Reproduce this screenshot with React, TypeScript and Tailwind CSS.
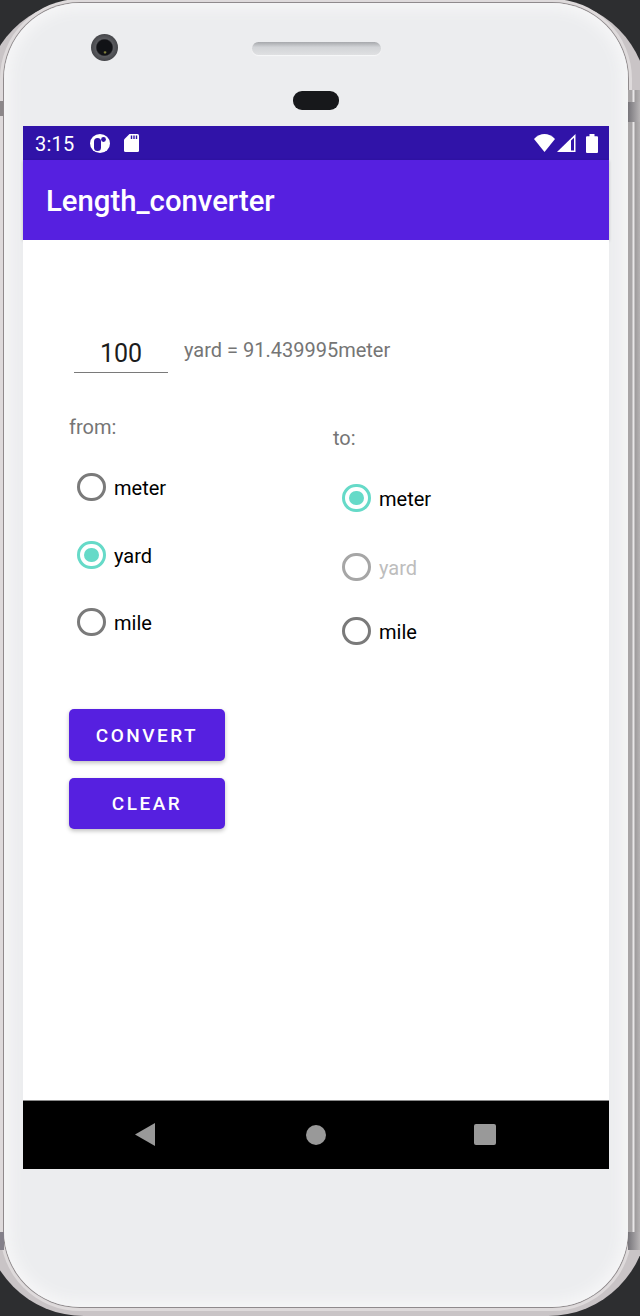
import React from 'react'

const WifiIcon = () => (
  <svg width="21" height="18" viewBox="0 0 21 18" className="block">
    <path d="M0 5C3 1.8 6.8 0 10.5 0S18 1.8 21 5L10.5 18z" fill="#fff" />
  </svg>
)

const SignalIcon = () => (
  <svg width="19" height="18" viewBox="0 0 19 18" className="block">
    <path d="M0 18L18.5 0v18z" fill="#fff" />
    <path d="M14 6.6L17 3.7v12.8h-3z" fill="#3013a8" />
  </svg>
)

const BatteryIcon = () => (
  <svg width="12" height="19" viewBox="0 0 12 19" className="block">
    <path d="M3.5 0h5v2.2H11a1 1 0 0 1 1 1V18a1 1 0 0 1-1 1H1a1 1 0 0 1-1-1V3.2a1 1 0 0 1 1-1h2.5z" fill="#fff" />
  </svg>
)

const LauncherIcon = () => (
  <svg width="20" height="19" viewBox="0 0 20 19" className="block">
    <ellipse cx="10" cy="9.5" rx="10" ry="9.5" fill="#fff" />
    <rect x="4" y="4" width="7" height="13" rx="3.5" fill="#3013a8" />
    <circle cx="13.5" cy="5.5" r="2.4" fill="#3013a8" />
  </svg>
)

const SdIcon = () => (
  <svg width="15" height="18" viewBox="0 0 15 18" className="block">
    <path d="M5.5 0h8A1.5 1.5 0 0 1 15 1.5v15a1.5 1.5 0 0 1-1.5 1.5h-12A1.5 1.5 0 0 1 0 16.5V5.5z" fill="#fff" />
    <path d="M6.8 1.5h1.4V5H6.8zM9.300 1.5h1.400V5H9.300zM11.800 1.500h1.400V5h-1.400z" fill="#3013a8" />
  </svg>
)

type RadioProps = {
  label: string
  checked?: boolean
  disabled?: boolean
  className?: string
}

const Radio = ({ label, checked, disabled, className }: RadioProps) => {
  const ring = checked ? 'border-[#66dac8]' : disabled ? 'border-[#a6a6a6]' : 'border-[#7a7a7a]'
  return (
    <div className={`flex items-center h-[30px] ${className ?? ''}`}>
      <div className={`flex items-center justify-center w-[29px] h-[28px] rounded-full border-[3px] ${ring}`}>
        {checked && <div className="w-[15px] h-[14px] rounded-full bg-[#66dac8]" />}
      </div>
      <span className={`ml-[8px] mt-[2px] text-[20px] leading-[30px] ${disabled ? 'text-[#bdbdbd]' : 'text-black'}`}>{label}</span>
    </div>
  )
}

const ActionButton = ({ label, className }: { label: string; className?: string }) => (
  <button className={`block w-[156px] pt-[2px] bg-[#5620e0] text-white rounded-[5px] text-[19px] font-medium tracking-[2.5px] shadow-[0_2px_4px_rgba(0,0,0,0.25)] ${className ?? ''}`}>
    {label}
  </button>
)

export default function App() {
  return (
    <div className="relative w-[640px] h-[1316px] bg-[#2d2e30] overflow-hidden font-['Roboto',sans-serif]">
      {/* Phone body, its rim runs past the window on both sides */}
      <div className="-ml-[16px] w-[664px] h-full rounded-[100px] bg-[#c9c4c6] pt-[3px] pb-[9px] px-[20px]">
        <div className="h-full rounded-[76px] bg-[#ecedef] shadow-[0_0_0_1px_#8f8a8c,0_0_0_4px_#dedadb,inset_0_0_14px_6px_#f6f6f7] flex flex-col">
          {/* Top bezel */}
          <div className="h-[123px] shrink-0">
            <div className="flex items-start pt-[31px] pl-[87px]">
              <div className="w-[27px] h-[27px] rounded-full bg-[radial-gradient(circle_at_52%_68%,#a9a84a_0,transparent_8%),radial-gradient(circle_closest-side,#101216_0%,#111216_56%,#5a5b5f_66%,#45464a_100%)]" />
              <div className="ml-[134px] mt-[8px] w-[129px] h-[13px] rounded-full bg-[linear-gradient(#a6a8ac,#d2d4d7_40%,#dfe0e2)] shadow-[0_1px_1px_#f8f8f9]" />
            </div>
            <div className="mt-[30px] ml-[289px] w-[46px] h-[19px] rounded-[9px] bg-[#17181b]" />
          </div>

          {/* Screen */}
          <div className="ml-[19px] w-[586px] h-[1043px] shrink-0 flex flex-col">
            <div className="h-[34px] bg-[#3013a8] flex items-center pl-[12px] pr-[11px] text-white">
              <span className="pt-[1px] text-[20px] tracking-[0.2px]">3:15</span>
              <div className="ml-[16px]"><LauncherIcon /></div>
              <div className="ml-[14px]"><SdIcon /></div>
              <div className="ml-auto flex items-center gap-[2px]">
                <WifiIcon />
                <SignalIcon />
                <div className="ml-[8px]"><BatteryIcon /></div>
              </div>
            </div>
            <div className="h-[80px] bg-[#5620e0] flex items-center pl-[23px] shadow-[0_1px_3px_rgba(0,0,0,0.2)]">
              <span className="pt-[3px] text-[29.3px] font-medium text-white leading-none">Length_converter</span>
            </div>

            <div className="flex-1 bg-white pt-[95px]">
              <div className="flex items-start ml-[51px]">
                <div className="w-[94px] h-[38px] border-b border-[#7a7a7a] text-center text-[25px] leading-[38px] text-[#1c1c1c]">100</div>
                <span className="ml-[16px] text-[20px] leading-[30px] text-[#757575]">yard = 91.439995meter</span>
              </div>

              <div className="flex">
                <div className="ml-[46px] w-[264px]">
                  <div className="mt-[39px] text-[20px] leading-[30px] text-[#757575]">from:</div>
                  <Radio className="mt-[30px] ml-[8px]" label="meter" />
                  <Radio className="mt-[38px] ml-[8px]" label="yard" checked />
                  <Radio className="mt-[37px] ml-[8px]" label="mile" />
                  <ActionButton className="mt-[72px] h-[52px]" label="CONVERT" />
                  <ActionButton className="mt-[17px] h-[51px]" label="CLEAR" />
                </div>
                <div>
                  <div className="mt-[50px] text-[20px] leading-[30px] text-[#757575]">to:</div>
                  <Radio className="mt-[30px] ml-[9px]" label="meter" checked />
                  <Radio className="mt-[39px] ml-[9px]" label="yard" disabled />
                  <Radio className="mt-[34px] ml-[9px]" label="mile" />
                </div>
              </div>
            </div>

            {/* Navigation bar */}
            <div className="h-[69px] pb-[1px] bg-black border-t border-[#8a8a8a] flex items-center">
              <svg width="20" height="23" viewBox="0 0 20 23" className="ml-[112px]">
                <path d="M20 0v23L0 11.5z" fill="#999" />
              </svg>
              <div className="ml-[151px] w-[20px] h-[20px] rounded-full bg-[#999]" />
              <div className="ml-[148px] w-[22px] h-[21px] rounded-[2px] bg-[#999]" />
            </div>
          </div>
        </div>
      </div>

      {/* Rim stripes and side buttons */}
      <div className="absolute right-0 top-[90px] bottom-[72px] w-[12px] bg-[linear-gradient(90deg,#a8a5a6_0,#a8a5a6_4px,#e8e6e7_5px,#e8e6e7_6px,#9d9a9b_7px,#b5b2b3_12px)]" />
      <div className="absolute left-0 top-[101px] w-[3px] h-[15px] bg-[#8c888a]" />
      <div className="absolute right-0 top-[102px] w-[12px] h-[20px] bg-[linear-gradient(90deg,#77757a,#b8b5b6)]" />
      <div className="absolute left-0 top-[1232px] w-[4px] h-[18px] bg-[#84808a]" />
      <div className="absolute right-0 top-[1232px] w-[12px] h-[18px] bg-[linear-gradient(90deg,#77757a,#b8b5b6)]" />
    </div>
  )
}
